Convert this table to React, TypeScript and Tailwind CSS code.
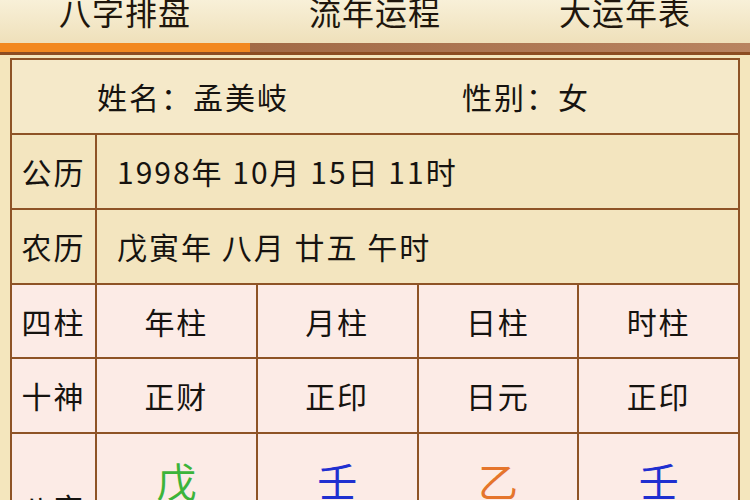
import React from 'react';

const font = { fontFamily: '"Noto Sans CJK SC", "Noto Sans", sans-serif' };

const tabs = ['八字排盘', '流年运程', '大运年表'];

const pillars = [
    { name: '年柱', god: '正财', stem: '戊', branch: '寅', color: 'text-[#3cb43a]' },
    { name: '月柱', god: '正印', stem: '壬', branch: '戌', color: 'text-[#1f2fd0]' },
    { name: '日柱', god: '日元', stem: '乙', branch: '卯', color: 'text-[#e5752c]' },
    { name: '时柱', god: '正印', stem: '壬', branch: '午', color: 'text-[#1f2fd0]' },
];

const Label = ({ text }: { text: string }) => (
    <div className="w-[85px] shrink-0 flex items-center justify-center border-r-2 border-[#8e5326]">
        <p className="text-[30px] tracking-[2px]">{text}</p>
    </div>
);

export default function App() {
    return (
        <div style={font} className="w-[750px] h-[500px] overflow-hidden bg-[#f4e6bd] text-[#161310]">
            <div className="h-[43px] overflow-hidden flex bg-gradient-to-b from-[#f8f0d8] to-[#efe0ba]">
                {tabs.map((t) => (
                    <div key={t} className="w-[250px] flex justify-center">
                        <p className="text-[32px] leading-none tracking-[1px] -mt-[5px] text-[#20160c]">{t}</p>
                    </div>
                ))}
            </div>
            <div className="flex h-[9px]">
                <div className="w-[250px] bg-[#f2881f]"></div>
                <div className="flex-1 bg-gradient-to-r from-[#a26a45] to-[#b98460]"></div>
            </div>
            <div className="h-[3px] bg-[#8c4d22]"></div>
            <div className="h-[3px]"></div>
            <div className="ml-[10px] w-[730px] border-2 border-[#8e5326] border-b-0">
                <div className="h-[75px] flex items-center bg-[#f5e9c9] border-b-2 border-[#8e5326]">
                    <p className="text-[30px] tracking-[2px] ml-[85px] w-[365px]">姓名：孟美岐</p>
                    <p className="text-[30px] tracking-[2px]">性别：女</p>
                </div>
                <div className="h-[75px] flex bg-[#f3e5bf] border-b-2 border-[#8e5326]">
                    <Label text="公历" />
                    <p className="text-[30px] tracking-[2px] self-center pl-[20px]">1998年 10月 15日 11时</p>
                </div>
                <div className="h-[75px] flex bg-[#f3e5bf] border-b-2 border-[#8e5326]">
                    <Label text="农历" />
                    <p className="text-[30px] tracking-[2px] self-center pl-[20px]">戊寅年 八月 廿五 午时</p>
                </div>
                <div className="h-[74px] flex bg-[#fcebe6] border-b-2 border-[#8e5326]">
                    <Label text="四柱" />
                    {pillars.map((p, i) => (
                        <div key={i} className={`flex-1 flex items-center justify-center ${i < 3 ? 'border-r-2 border-[#8e5326]' : ''}`}>
                            <p className="text-[30px] tracking-[2px]">{p.name}</p>
                        </div>
                    ))}
                </div>
                <div className="h-[75px] flex bg-[#fcebe6] border-b-2 border-[#8e5326]">
                    <Label text="十神" />
                    {pillars.map((p, i) => (
                        <div key={i} className={`flex-1 flex items-center justify-center ${i < 3 ? 'border-r-2 border-[#8e5326]' : ''}`}>
                            <p className="text-[30px] tracking-[2px]">{p.god}</p>
                        </div>
                    ))}
                </div>
                <div className="h-[146px] flex bg-[#fcebe6]">
                    <Label text="八字" />
                    {pillars.map((p, i) => (
                        <div key={i} className={`flex-1 flex flex-col items-center gap-[10px] pt-[26px] ${i < 3 ? 'border-r-2 border-[#8e5326]' : ''}`}>
                            <p className={`text-[40px] leading-none ${p.color}`}>{p.stem}</p>
                            <p className="text-[40px] leading-none">{p.branch}</p>
                        </div>
                    ))}
                </div>
            </div>
        </div>
    );
}
